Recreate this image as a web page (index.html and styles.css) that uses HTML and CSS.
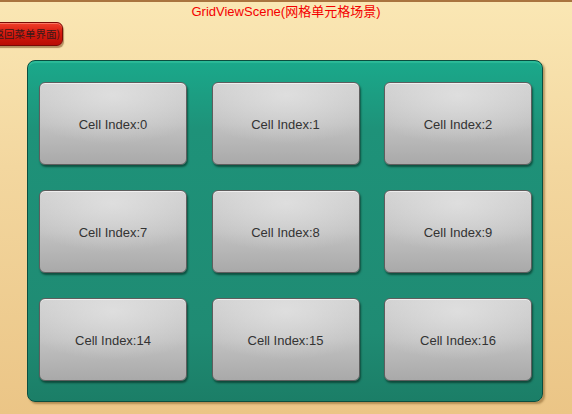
FILE: index.html
```html
<!DOCTYPE html>
<html lang="zh">
<head>
<meta charset="utf-8">
<title>GridViewScene</title>
<link rel="stylesheet" href="styles.css">
</head>
<body>
<div class="scene">
  <div class="title">GridViewScene(网格单元格场景)</div>
  <div class="toolbar">
    <button class="back-btn">(返回菜单界面)</button>
  </div>
  <div class="panel">
    <div class="cell">Cell Index:0</div>
    <div class="cell">Cell Index:1</div>
    <div class="cell">Cell Index:2</div>
    <div class="cell">Cell Index:7</div>
    <div class="cell">Cell Index:8</div>
    <div class="cell">Cell Index:9</div>
    <div class="cell">Cell Index:14</div>
    <div class="cell">Cell Index:15</div>
    <div class="cell">Cell Index:16</div>
  </div>
</div>
</body>
</html>
```

FILE: styles.css
```css
html, body {
  margin: 0;
  padding: 0;
}
body {
  width: 572px;
  height: 414px;
  overflow: hidden;
  font-family: "Liberation Sans", "Noto Sans CJK SC", sans-serif;
}
.scene {
  width: 572px;
  height: 414px;
  box-sizing: border-box;
  border-top: 2px solid #a9743f;
  background: linear-gradient(to bottom, #fae7b4 0%, #f3d79f 40%, #ebc586 100%);
  overflow: hidden;
}
.title {
  height: 20px;
  padding-top: 1px;
  box-sizing: border-box;
  text-align: center;
  color: #f40000;
  font-size: 13px;
  line-height: 18px;
}
.toolbar {
  height: 38px;
}
.back-btn {
  display: block;
  margin-left: -20px;
  width: 83px;
  height: 24px;
  padding: 0 0 0 9px;
  border: 1px solid #7a0a06;
  border-radius: 6px;
  background: linear-gradient(to bottom, #f0402c 0%, #d71a0e 45%, #b80e06 100%);
  box-shadow: 1px 2px 1px rgba(90, 40, 0, 0.45), inset 0 1px 0 rgba(255, 160, 140, 0.6);
  color: #3a1a1a;
  font-family: "Noto Sans CJK SC", "Liberation Sans", sans-serif;
  font-size: 10.5px;
  line-height: 22px;
  white-space: nowrap;
  text-align: left;
}
.panel {
  margin-left: 27px;
  width: 516px;
  height: 342px;
  box-sizing: border-box;
  padding: 21px 11px 21px 11px;
  border: 1.5px solid #0b4e3f;
  border-radius: 8px;
  background: linear-gradient(to bottom, #1aa98b 0%, #1e9279 20%, #1f8b73 80%, #1b7e67 100%);
  box-shadow: 2px 2px 2px rgba(110, 70, 20, 0.45), inset 0 2px 1px rgba(80, 220, 180, 0.35);
  display: grid;
  grid-template-columns: 148px 148px 148px;
  grid-template-rows: 83px 83px 83px;
  column-gap: 24.5px;
  row-gap: 25px;
}
.cell {
  box-sizing: border-box;
  border: 1.5px solid #5e5e5e;
  border-radius: 6px;
  background:
    radial-gradient(ellipse 70% 60% at 50% 15%, rgba(230, 230, 230, 0.7) 0%, rgba(230, 230, 230, 0) 100%),
    linear-gradient(to bottom, #cfcfcf 0%, #c2c2c2 50%, #a9a9a9 100%);
  box-shadow: 1px 2px 2px rgba(0, 30, 20, 0.55), inset 0 1px 0 rgba(255, 255, 255, 0.6);
  display: flex;
  align-items: center;
  justify-content: center;
  padding-top: 2px;
  color: #333;
  font-size: 13px;
}
```
